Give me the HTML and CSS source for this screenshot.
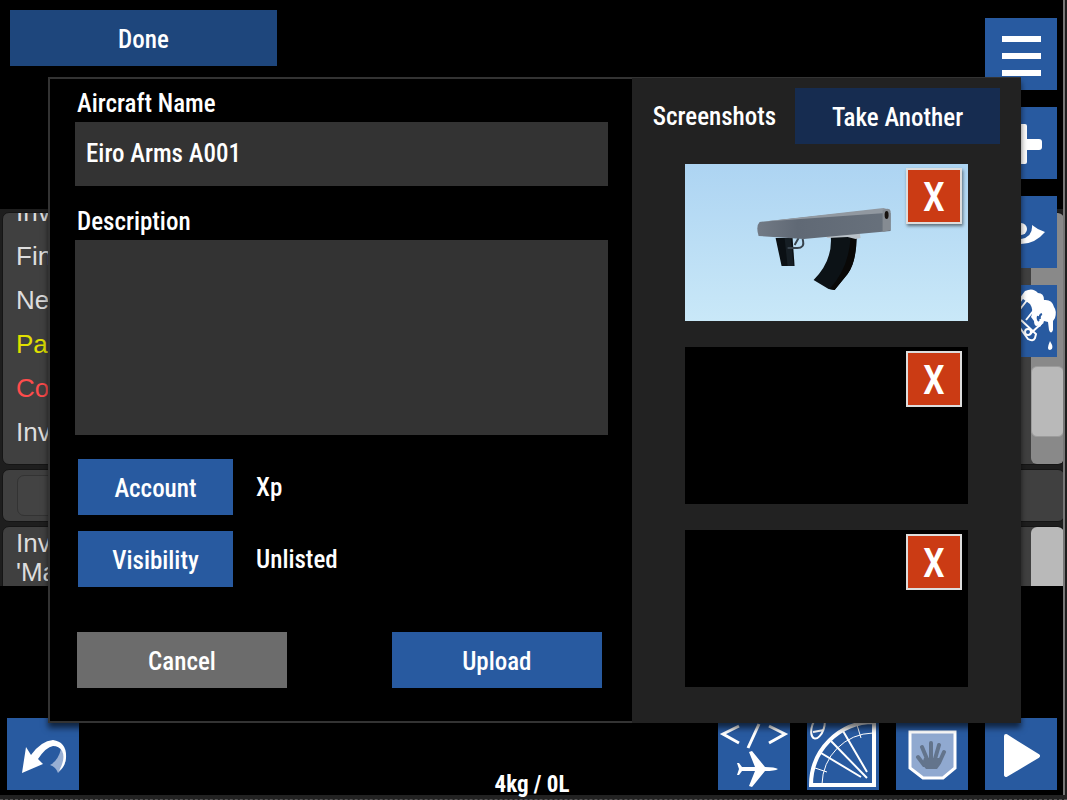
FILE: index.html
```html
<!DOCTYPE html>
<html lang="en">
<head>
    <meta charset="UTF-8">
    <meta name="viewport" content="width=device-width, initial-scale=1.0">
    <title>Upload Aircraft</title>
    <link rel="stylesheet" href="styles.css">
</head>
<body>
    <div class="game">
        <div class="console">
            <div class="panel log">
                <ul class="log-lines">
                    <li>Inv</li>
                    <li>Fin</li>
                    <li>Ne</li>
                    <li class="warning">Pa</li>
                    <li class="error">Co</li>
                    <li>Inv</li>
                </ul>
                <div class="track"><div class="thumb"></div></div>
            </div>
            <div class="panel command"><div class="command-box"></div></div>
            <div class="panel message">
                <p>Inv<br>'Ma</p>
                <div class="track full"></div>
            </div>
        </div>

        <div class="edge-right"></div>
        <div class="edge-bottom"></div>

        <div class="hud">
            <div class="hud-top">
                <button class="btn done">Done</button>
                <div class="tools-side">
                    <button class="tool" aria-label="Menu">
                        <svg viewBox="0 0 72 72"><path d="M17 18h39v6H17zM17 35h39v6H17zM17 52h39v6H17z" fill="#fff"/></svg>
                    </button>
                    <button class="tool" aria-label="Add part">
                        <svg viewBox="0 0 72 72"><g fill="#fff"><rect x="30" y="17" width="12" height="40" rx="2"/><rect x="16" y="32" width="41" height="11" rx="3"/></g></svg>
                    </button>
                    <button class="tool" aria-label="View">
                        <svg viewBox="0 0 72 72"><path d="M47 29q6 5 13 7-10 12-24 12-13 0-24-12 12 7 24 7 12-2 11-14z" fill="#fff"/><circle cx="36" cy="33" r="6" fill="#fff"/></svg>
                    </button>
                    <button class="tool" aria-label="Paint">
                        <svg viewBox="0 0 72 72">
                            <path d="M34 14l6-8q8-4 13 2 6 0 6 7 8-1 10 7 3 4 1 11l-2 3v9q-2 5-4 0l-1-8-4-1-1 3-4-2-2 4q-3 0-3-5l-3-4q3-7-1-13l-7-5-5 7z" fill="#fff"/>
                            <path d="M52 34l6 3-3 5-4-2z" fill="#fff"/>
                            <path d="M57 29q-3 1-2 5M53 31q-1 3 1 5" stroke="#285aa0" stroke-width="2" fill="none"/>
                            <path d="M65 56q-4 9 0 9 5-1 0-9z" fill="#fff"/>
                            <g fill="none" stroke="#fff" stroke-width="2"><path d="M30 36l13 18q5 3 7-1l1-4-15-14"/><path d="M32 28l11-14M45 49l12-11M41 35l8-10"/><circle cx="43" cy="47" r="3"/></g>
                        </svg>
                    </button>
                </div>
            </div>
            <div class="hud-bottom">
                <button class="tool" aria-label="Undo">
                    <svg viewBox="0 0 72 72"><path d="M54 31l5 8q0 9-8 16-2-6-8-8 8-4 11-16z" fill="#98afd3"/><path d="M15 55l4-26 5 8q10-14 22-15 14 2 13 18-1 9-7 13 7-13 3-20-3-5-9-5-7 1-15 13l5 5z" fill="#fff"/></svg>
                </button>
                <div class="weight">4kg / 0L</div>
                <div class="tools-bottom">
                    <button class="tool" aria-label="Code">
                        <svg viewBox="0 0 72 72">
                            <path d="M21 8L5 16l16 9M51 8l16 8-16 9M41 6L30 30" fill="none" stroke="#fff" stroke-width="3"/>
                            <path d="M24 49h13l-6-15 3-1 13 16q10 0 13 2-3 2-13 2L34 69l-3-1 6-15H24l-3 4h-2l2-6-2-6h2z" fill="#fff"/>
                        </svg>
                    </button>
                    <button class="tool" aria-label="Angles">
                        <svg viewBox="0 0 72 72">
                            <g fill="none" stroke="#fff">
                                <path d="M67 4v63H4A63 63 0 0 1 67 4" stroke-width="4"/>
                                <path d="M15 66A52 52 0 0 1 66 15M8 50l12 4M50 7l4 13" stroke-width="1"/>
                                <path d="M14 35l40 24M24 23l36 37M36 13l24 41" stroke-width="2"/>
                                <ellipse cx="11" cy="9" rx="6" ry="12" transform="rotate(18 11 9)" stroke-width="2"/>
                                <path d="M6 14l11-2" stroke-width="2"/>
                            </g>
                        </svg>
                    </button>
                    <button class="tool" aria-label="Grab">
                        <svg viewBox="0 0 72 72">
                            <path d="M14 14h45v36L47 60H27L14 50z" fill="#90a9d0" stroke="#fff" stroke-width="3"/>
                            <path d="M28 47l-6-8M31 41l-5-12M35 40V25M39 41l4-14M43 45l5-11" stroke="#63748c" stroke-width="4" stroke-linecap="round"/>
                            <path d="M28 40h16v7l-3 4H30l-4-5z" fill="#63748c"/>
                        </svg>
                    </button>
                    <button class="tool" aria-label="Play">
                        <svg viewBox="0 0 72 72"><path d="M21 18l32 20-32 19z" fill="#fff" stroke="#fff" stroke-width="4" stroke-linejoin="round"/></svg>
                    </button>
                </div>
            </div>
        </div>

        <div class="dialog" role="dialog" aria-label="Upload aircraft">
            <form class="details">
                <label for="name">Aircraft Name</label>
                <input id="name" type="text" value="Eiro Arms A001">
                <label for="description">Description</label>
                <textarea id="description"></textarea>
                <div class="option">
                    <button type="button" class="btn">Account</button>
                    <span>Xp</span>
                </div>
                <div class="option">
                    <button type="button" class="btn">Visibility</button>
                    <span>Unlisted</span>
                </div>
                <div class="actions">
                    <button type="button" class="btn cancel">Cancel</button>
                    <button type="button" class="btn">Upload</button>
                </div>
            </form>
            <div class="screenshots">
                <div class="shots-header">
                    <span>Screenshots</span>
                    <button class="btn take">Take Another</button>
                </div>
                <div class="shot sky">
                    <svg class="model" viewBox="0 0 282 157">
                        <defs>
                            <linearGradient id="body" x1="0" x2="1"><stop offset="0" stop-color="#727a85"/><stop offset=".3" stop-color="#606975"/><stop offset="1" stop-color="#68717c"/></linearGradient>
                        </defs>
                        <path d="M90 74h17l2 28H96z" fill="#0b1014"/>
                        <path d="M105 74l3 28h-6l-3-28z" fill="#161e24"/>
                        <path d="M113 74l-4 7M117 75q3 10-7 9h-8" fill="none" stroke="#38434d" stroke-width="2"/>
                        <path d="M145 70h26q0 28-9 40l-13 16-6-1-15-9q20-20 17-46z" fill="#0c1216"/>
                        <path d="M165 72h6q0 26-9 38l-13 16-5-1q20-22 21-53z" fill="#090807"/>
                        <path d="M139 71l35-3 1 6-5 1-8-2-20 1z" fill="#b9c1c8"/>
                        <path d="M74 58l123-13 8 4v18L118 75 73 72q-3-10 1-14z" fill="url(#body)"/>
                        <path d="M74 58L198 44l6 2-4 3z" fill="#9198a0"/>
                        <path d="M197 46q7-3 8 1v19l-8 2z" fill="#858b92"/>
                        <ellipse cx="201" cy="51" rx="2" ry="4" fill="#17120f"/>
                    </svg>
                    <button class="remove" aria-label="Remove screenshot 1">X</button>
                </div>
                <div class="shot">
                    <button class="remove" aria-label="Remove screenshot 2">X</button>
                </div>
                <div class="shot">
                    <button class="remove" aria-label="Remove screenshot 3">X</button>
                </div>
            </div>
        </div>
    </div>
</body>
</html>
```
FILE: styles.css
```css
* {
    box-sizing: border-box;
}

body {
    margin: 0;
    background-color: #000;
    color: #fff;
    font-family: "Roboto Condensed", Roboto, sans-serif;
    font-size: 25px;
    font-weight: 500;
}

button,
input,
textarea {
    font: inherit;
    color: inherit;
    border: none;
    border-radius: 0;
    padding: 0;
}

.game {
    position: relative;
    min-height: 100vh;
    overflow: hidden;
}

/* developer console behind everything */
.console {
    position: absolute;
    top: 209px;
    left: 0;
    right: 0;
    height: 377px;
    padding: 3px 2px 0;
    overflow: hidden;
    background-color: #1e1e1e;
    color: #ddd;
    font-family: "Liberation Sans", sans-serif;
    font-size: 26px;
    font-weight: normal;
}

.panel {
    display: flex;
    justify-content: space-between;
    margin-bottom: 4px;
    overflow: hidden;
    border: 1px solid #151515;
    border-radius: 7px;
    background-color: #404040;
}

.log {
    height: 253px;
}

.log-lines {
    margin: -23px 0 0;
    padding: 0 0 0 13px;
    list-style: none;
    line-height: 44px;
}

.warning {
    color: #e0e000;
}

.error {
    color: #ff4c4c;
}

.track {
    display: flex;
    flex-direction: column;
    width: 33px;
    border-radius: 6px;
    background-color: #898989;
}

.thumb {
    height: 71px;
    margin-top: 153px;
    border: 1px solid #9c9c9c;
    border-radius: 6px;
    background-color: #b9b9b9;
}

.full {
    background-color: #b9b9b9;
}

.command {
    height: 53px;
    padding: 5px 14px;
}

.command-box {
    width: 50%;
    border: 1px solid #333;
    border-radius: 7px;
    background-color: #434343;
}

.message {
    height: 80px;
}

.message p {
    margin: 2px 0 0;
    padding-left: 13px;
    line-height: 29px;
}

.edge-right {
    position: absolute;
    top: 0;
    right: 0;
    bottom: 0;
    width: 4px;
    border-left: 2px solid #777;
    background-color: #1e1e1e;
}

.edge-bottom {
    position: absolute;
    left: 0;
    right: 0;
    bottom: 0;
    height: 5px;
    border-bottom: 1px dashed #555;
    background-color: #222;
}

/* toolbars */
.hud {
    position: relative;
    display: flex;
    flex-direction: column;
    justify-content: space-between;
    min-height: 100vh;
    padding: 10px 10px 3px 7px;
}

.hud-top {
    display: flex;
    justify-content: space-between;
    align-items: flex-start;
    padding-left: 3px;
}

.tools-side {
    display: flex;
    flex-direction: column;
    gap: 17px;
    padding-top: 8px;
}

.hud-bottom {
    display: grid;
    grid-template-columns: 1fr auto 1fr;
    align-items: end;
}

.tools-bottom {
    display: flex;
    justify-content: flex-end;
    gap: 17px;
}

.tool {
    width: 72px;
    height: 72px;
    background-color: #285aa0;
    cursor: pointer;
}

.tool svg {
    display: block;
}

.hud-bottom .tool {
    margin-bottom: 7px;
}

.weight {
    font-size: 23px;
    font-weight: bold;
    line-height: 24px;
}

.btn {
    height: 56px;
    padding-top: 2px;
    background-color: #285aa0;
    cursor: pointer;
}

.done {
    width: 25vw;
    background-color: #1e467c;
}

/* upload dialog */
.dialog {
    position: absolute;
    top: 77px;
    left: 48px;
    right: 46px;
    display: flex;
    align-items: flex-start;
    box-shadow: 0 5px 6px rgba(0, 0, 0, 0.6);
}

.details {
    width: 60%;
    display: flex;
    flex-direction: column;
    padding: 9px 24px 33px 25px;
    border: 2px solid #333;
    border-right: none;
    background-color: #000;
}

.details label {
    padding-left: 2px;
    line-height: 32px;
    margin-bottom: 2px;
}

.details input,
.details textarea {
    width: 100%;
    padding: 0 11px;
    background-color: #333;
}

.details input {
    height: 64px;
    padding-bottom: 2px;
    margin-bottom: 20px;
}

.details textarea {
    height: 195px;
    margin-bottom: 24px;
    resize: none;
}

.option {
    display: flex;
    align-items: center;
    gap: 23px;
    margin: 0 0 16px 3px;
}

.option .btn {
    width: 155px;
}

.actions {
    display: flex;
    justify-content: space-between;
    margin-top: 29px;
    padding: 0 6px 0 2px;
}

.actions .btn {
    width: 40%;
}

.actions .cancel {
    background-color: #6c6c6c;
}

.screenshots {
    width: 40%;
    display: flex;
    flex-direction: column;
    gap: 26px;
    align-self: stretch;
    padding: 10px 21px 36px;
    border-top: 1px solid #333;
    background-color: #222;
}

.shots-header {
    display: flex;
    justify-content: space-between;
    align-items: center;
    margin-bottom: -6px;
}

.take {
    width: 59%;
    background-color: #162c50;
}

.shot {
    position: relative;
    height: 157px;
    margin: 0 32px;
    background-color: #000;
}

.sky {
    background: linear-gradient(#add4f2, #c9e8f8);
}

.model {
    display: block;
    width: 100%;
    height: 100%;
}

.remove {
    position: absolute;
    top: 4px;
    right: 6px;
    width: 56px;
    height: 56px;
    padding-top: 2px;
    border: 2px solid #ddd;
    background-color: #cb3b14;
    box-shadow: 1px 2px 3px rgba(0, 0, 0, 0.5);
    font-size: 40px;
    cursor: pointer;
}
```
